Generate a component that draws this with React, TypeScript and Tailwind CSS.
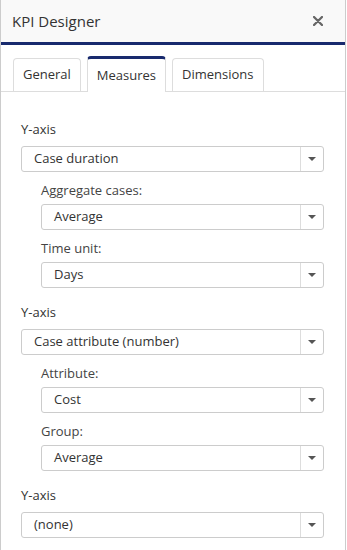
import React from "react";

const font = { fontFamily: '"Open Sans", "Noto Sans", sans-serif' };

function Select({ value }: { value: string }) {
  return (
    <div className="flex h-[26px] items-stretch rounded-[3px] border border-[#cccccc] bg-white">
      <div className="flex flex-1 items-center pl-[12px] text-[13px] text-[#333333]">{value}</div>
      <div className="flex w-[23px] items-center justify-center border-l border-[#dddddd]">
        <svg width="8" height="4" viewBox="0 0 8 4">
          <path d="M0 0 L8 0 L4 4 Z" fill="#555555" />
        </svg>
      </div>
    </div>
  );
}

function SubField({ label, value }: { label: string; value: string }) {
  return (
    <div className="pl-[20px]">
      <div className="mb-[5px] text-[13px] leading-[18px] text-[#444444]">{label}</div>
      <Select value={value} />
    </div>
  );
}

function AxisGroup({ value, subs }: { value: string; subs: { label: string; value: string }[] }) {
  return (
    <div className="flex flex-col gap-[9px]">
      <div>
        <div className="mb-[8px] text-[13px] leading-[18px] text-[#333333]">Y-axis</div>
        <Select value={value} />
      </div>
      {subs.map((s) => (
        <SubField key={s.label} label={s.label} value={s.value} />
      ))}
    </div>
  );
}

export default function App() {
  const tabs = ["General", "Measures", "Dimensions"];
  const active = "Measures";

  return (
    <div className="h-[550px] w-[347px] overflow-hidden bg-white" style={font}>
      <div className="h-full w-[346px] border-x border-[#cccccc] bg-white">
        <div className="flex h-[42px] items-center justify-between bg-[#f9f9f9] pl-[11px] pr-[22px]">
          <span className="text-[15px] text-[#333333]">KPI Designer</span>
          <svg width="10" height="10" viewBox="0 0 10 10">
            <path d="M1 1 L9 9 M9 1 L1 9" stroke="#666666" strokeWidth="2.3" strokeLinecap="round" />
          </svg>
        </div>
        <div className="h-[3px] bg-[#182a6e]" />

        <div className="flex h-[47px] items-end gap-[6px] border-b border-[#dddddd] pl-[12px]">
          {tabs.map((t) =>
            t === active ? (
              <div
                key={t}
                className="-mb-px flex h-[36px] items-center rounded-t-[4px] border-x border-t-[3px] border-x-[#dddddd] border-t-[#182a6e] bg-white px-[9px] text-[13px] text-[#333333]"
              >
                {t}
              </div>
            ) : (
              <div
                key={t}
                className="flex h-[33px] items-center rounded-t-[4px] border border-b-0 border-[#dddddd] bg-white px-[9px] text-[13px] text-[#333333]"
              >
                {t}
              </div>
            )
          )}
        </div>

        <div className="flex flex-col gap-[15px] pl-[20px] pr-[21px] pt-[28px]">
          <AxisGroup
            value="Case duration"
            subs={[
              { label: "Aggregate cases:", value: "Average" },
              { label: "Time unit:", value: "Days" },
            ]}
          />
          <AxisGroup
            value="Case attribute (number)"
            subs={[
              { label: "Attribute:", value: "Cost" },
              { label: "Group:", value: "Average" },
            ]}
          />
          <AxisGroup value="(none)" subs={[]} />
        </div>
      </div>
    </div>
  );
}
